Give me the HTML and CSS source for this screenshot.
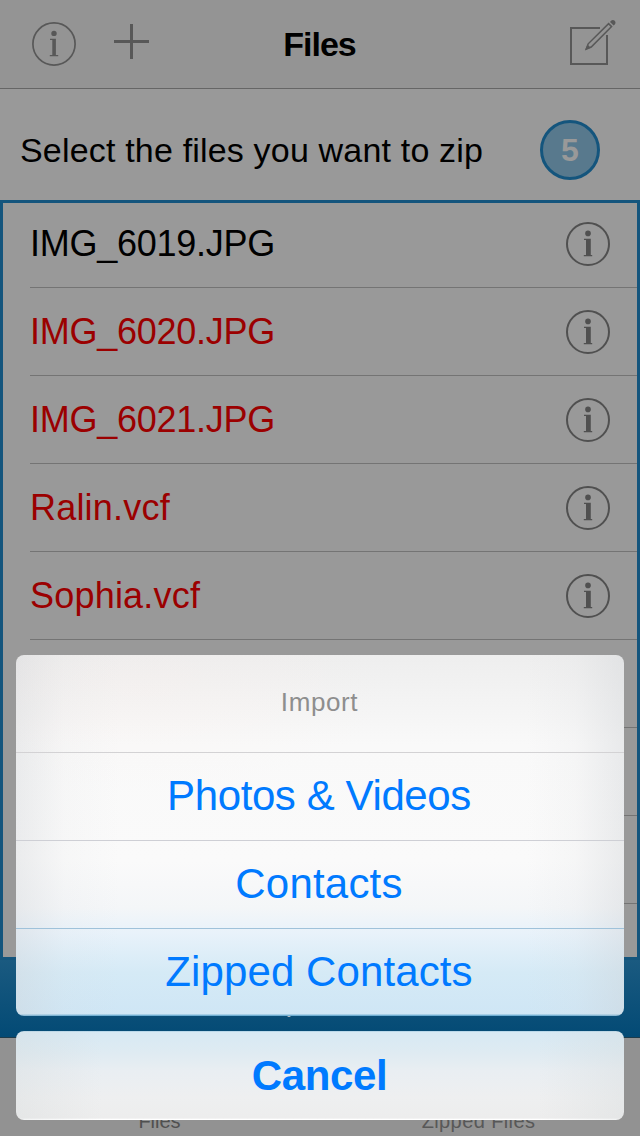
FILE: index.html
```html
<!DOCTYPE html>
<html lang="en">
<head>
<meta charset="utf-8">
<title>Files</title>
<link rel="stylesheet" href="styles.css">
</head>
<body>
<svg class="defs" width="0" height="0">
  <symbol id="info" viewBox="0 0 44 44">
    <circle cx="22" cy="22" r="21" fill="none" stroke="currentColor" stroke-width="2"/>
    <circle cx="22" cy="11.4" r="2.8" fill="currentColor"/>
    <path d="M18 16.8H24.8V34.2H20V18H18ZM17.8 33H26.2V34.2H17.8Z" fill="currentColor"/>
  </symbol>
  <symbol id="info-thin" viewBox="0 0 44 44">
    <circle cx="22" cy="22" r="21.1" fill="none" stroke="currentColor" stroke-width="1.7"/>
    <circle cx="22" cy="11.4" r="2.7" fill="currentColor"/>
    <path d="M18 16.8H23.9V34.2H20.3V18H18ZM17.8 33H26.2V34.2H17.8Z" fill="currentColor"/>
  </symbol>
</svg>
<div class="screen">
  <header class="nav">
    <div class="nav-left">
      <svg class="info"><use href="#info-thin"/></svg>
      <svg class="plus" viewBox="0 0 35 35"><path d="M0 17.5H35M17.5 0V35" stroke="currentColor" stroke-width="3"/></svg>
    </div>
    <h1 class="title">Files</h1>
    <svg class="compose" viewBox="0 0 48 48" fill="none" stroke="currentColor">
      <path d="M31 9H2V45H38V16" stroke-width="2"/>
      <path d="M17.2 30.2L19.2 24.8L39.6 4.6L42.6 7.6L22.2 28Z" stroke-width="1.5"/>
      <path d="M16 31L18.5 25.4L21.8 28.7Z" fill="currentColor" stroke="none"/>
      <path d="M41 3C42.2 .8 44.4 .4 45.7 1.8C47.2 3.4 46.6 5.4 44.6 6.6Z" fill="currentColor" stroke="none"/>
    </svg>
  </header>
  <div class="prompt"><span class="prompt-text">Select the files you want to zip</span><span class="badge">5</span></div>
  <ul class="list">
    <li class="row current"><span>IMG_6019.JPG</span><svg class="info"><use href="#info"/></svg></li>
    <li class="row"><span>IMG_6020.JPG</span><svg class="info"><use href="#info"/></svg></li>
    <li class="row"><span>IMG_6021.JPG</span><svg class="info"><use href="#info"/></svg></li>
    <li class="row contact"><span>Ralin.vcf</span><svg class="info"><use href="#info"/></svg></li>
    <li class="row contact"><span>Sophia.vcf</span><svg class="info"><use href="#info"/></svg></li>
    <li class="row"></li>
    <li class="row"></li>
    <li class="row"></li>
  </ul>
  <div class="zip-bar"><i class="tail"></i></div>
  <footer class="tabs"><span class="tab">Files</span><span class="tab zipped">Zipped Files</span></footer>
  <div class="sheet">
    <div class="options">
      <div class="caption">Import</div>
      <div class="option photos">Photos &amp; Videos</div>
      <div class="option contacts">Contacts</div>
      <div class="option tinted">Zipped Contacts</div>
    </div>
    <div class="cancel">Cancel</div>
  </div>
</div>
</body>
</html>
```
FILE: styles.css
```css
* { box-sizing: border-box; }
body { margin: 0; }
.defs { display: block; }
.screen {
  position: relative;
  width: 640px;
  height: 1136px;
  overflow: hidden;
  display: flex;
  flex-direction: column;
  background: #999;
  color: #000;
  font-family: "Liberation Sans", Arial, sans-serif;
}
.nav {
  height: 89px;
  flex: none;
  display: grid;
  grid-template-columns: 1fr auto 1fr;
  align-items: center;
  padding: 0 23px 0 32px;
  background: #949494;
  border-bottom: 1px solid #666;
  color: #585858;
}
.nav-left { display: flex; gap: 38px; }
.info { width: 44px; height: 44px; flex: none; }
.plus { width: 35px; height: 35px; margin-top: 2px; }
.title { margin: 0 0 0 -10px; font-size: 34px; line-height: 40px; letter-spacing: -1px; color: #000; }
.compose { width: 48px; height: 48px; justify-self: end; margin-bottom: 2px; }
.prompt {
  height: 111px;
  flex: none;
  display: flex;
  align-items: center;
  justify-content: space-between;
  padding: 11px 40px 0 20px;
  font-size: 34px;
}
.prompt-text { letter-spacing: .18px; white-space: nowrap; }
.badge {
  width: 60px;
  height: 60px;
  border: 3px solid #14557d;
  border-radius: 50%;
  background: #58798d;
  color: #999;
  font-weight: bold;
  font-size: 32px;
  line-height: 55px;
  text-align: center;
}
.list {
  height: 760px;
  flex: none;
  margin: 0;
  padding: 0 0 0 27px;
  list-style: none;
  border: 3px solid #14557d;
}
.row {
  height: 88px;
  display: flex;
  align-items: center;
  justify-content: space-between;
  padding-right: 27px;
  border-bottom: 1px solid #747474;
  color: #9b0000;
  font-size: 36px;
  letter-spacing: -.25px;
}
.row:first-child { height: 85px; padding-bottom: 3px; }
.row .info { color: #505050; }
.row.current { color: #000; }
.row.contact { letter-spacing: .2px; }
.zip-bar {
  height: 78px;
  flex: none;
  padding: 55px 0 0 287px;
  background: linear-gradient(#1a5a80, #034a75);
  border-bottom: 1px solid #1d3b4b;
}
.tail { display: block; width: 4px; height: 2px; border-radius: 0 0 2px 2px; background: #ccc; }
.tabs {
  flex: 1;
  display: flex;
  align-items: flex-end;
  background: #929292;
  padding-bottom: 3px;
  font-size: 20px;
  line-height: 23px;
  color: #505050;
}
.tab { flex: 1; text-align: center; }
.zipped { letter-spacing: .4px; padding-right: 2px; color: #585858; }
.sheet {
  position: absolute;
  left: 16px;
  top: 655px;
  width: 608px;
  display: flex;
  flex-direction: column;
  gap: 15px;
  text-align: center;
  font-size: 42px;
  color: #007aff;
}
.options {
  height: 361px;
  border-radius: 8px;
  overflow: hidden;
  background:
    radial-gradient(ellipse 240px 100px at 130px 35px, rgba(255, 232, 225, .14), transparent),
    linear-gradient(90deg, rgba(205, 208, 212, .35), rgba(215, 217, 220, .1) 8%, transparent 17%, transparent 84%, rgba(215, 217, 220, .12) 92%, rgba(205, 208, 212, .38)),
    linear-gradient(#eee, #f9f9f9 25%, #fafafa 57%, #f4f6f8 70%, #e8f2fa 77%, #d5eaf6 88%, #cfe6f5 99.5%, #6faed2 99.7%);
}
.caption { height: 98px; line-height: 95px; padding-right: 1px; font-size: 26px; letter-spacing: .6px; color: #8e8e8e; border-bottom: 1px solid #d3d2d4; }
.option { height: 88px; line-height: 85px; padding-right: 2px; border-bottom: 1px solid #cecfd5; }
.photos { letter-spacing: -.4px; }
.contacts { letter-spacing: .2px; border-bottom-color: #9fc2da; }
.tinted { border-bottom: 0; letter-spacing: .1px; }
.cancel {
  height: 89px;
  line-height: 90px;
  padding-right: 1px;
  border-radius: 8px;
  font-weight: bold;
  letter-spacing: -.4px;
  background:
    linear-gradient(90deg, rgba(210, 215, 216, .3), transparent 14%, transparent 86%, rgba(210, 215, 216, .3)),
    linear-gradient(#a9cee3, #d7e9f4 1.5%, #dfebf2 25%, #e9eef2 45%, #eeeff0 75%, #ededed 98%, #fff 99%);
}
```
